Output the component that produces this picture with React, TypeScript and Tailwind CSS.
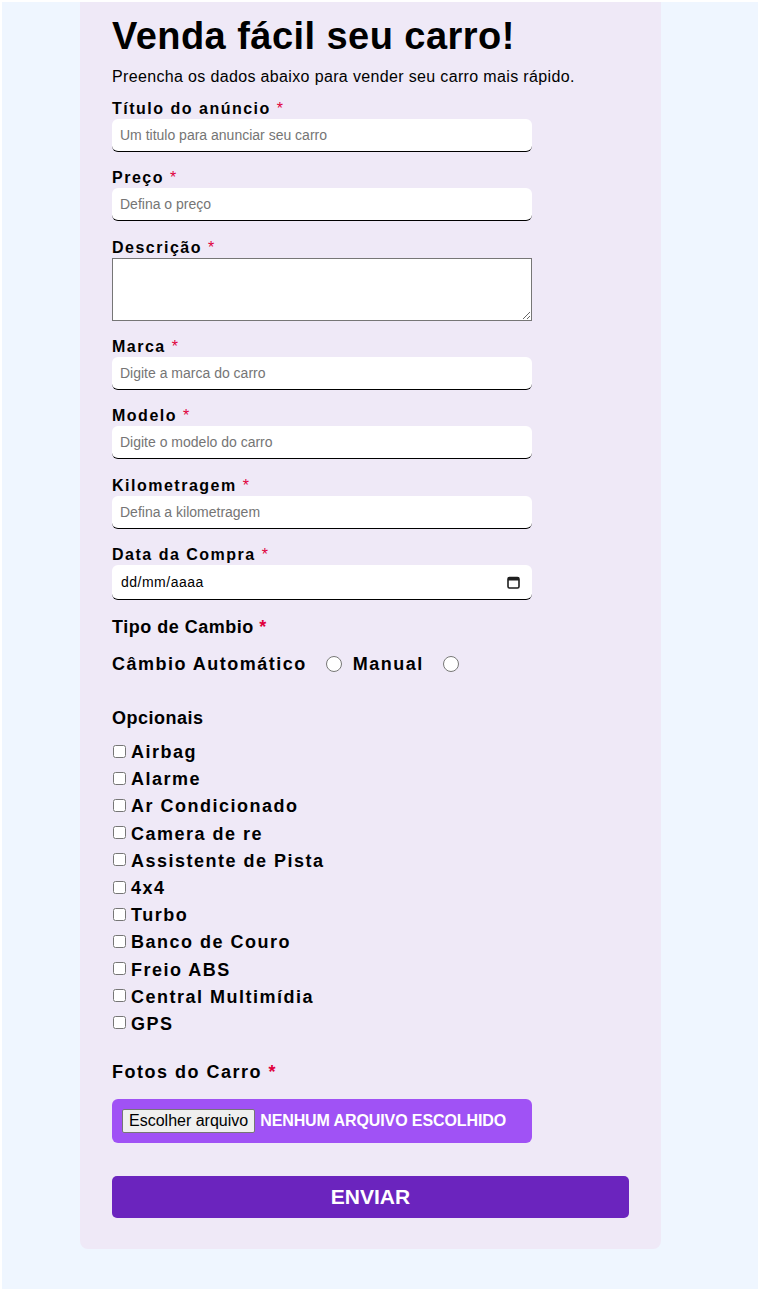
import React from "react";

const font = { fontFamily: '"Liberation Sans", Arial, sans-serif' };

function Req({ bold = false }: { bold?: boolean }) {
  return <span className={`text-[#e0003c] ${bold ? "font-bold" : "font-normal"}`}>*</span>;
}

function Label({ children }: { children: React.ReactNode }) {
  return (
    <label className="block text-[16px] leading-[19px] font-bold tracking-[1.5px] text-black mb-[1px]">
      {children} <Req />
    </label>
  );
}

function Field({ label, placeholder }: { label: string; placeholder: string }) {
  return (
    <div className="mb-[16.5px]">
      <Label>{label}</Label>
      <input
        placeholder={placeholder}
        className="block w-[420px] h-[33px] bg-white rounded-[6px] border-b border-black px-[8px] text-[14px] placeholder:text-[#757575] outline-none"
      />
    </div>
  );
}

const opcionais = [
  "Airbag",
  "Alarme",
  "Ar Condicionado",
  "Camera de re",
  "Assistente de Pista",
  "4x4",
  "Turbo",
  "Banco de Couro",
  "Freio ABS",
  "Central Multimídia",
  "GPS",
];

export default function App() {
  return (
    <div style={font} className="min-h-[1289px] bg-[#eff6ff] border-t-2 border-l-2 border-white">
      <div className="ml-[78px] w-[581px] bg-[#efe9f7] rounded-b-lg pl-[32px] pr-[32px] pt-[11px] pb-[31px]">
        <h1 className="text-[38px] leading-[46px] font-bold tracking-[0.45px] text-black">Venda fácil seu carro!</h1>
        <p className="text-[16px] leading-[20px] tracking-[0.35px] text-black mt-[8px] mb-[11.5px]">
          Preencha os dados abaixo para vender seu carro mais rápido.
        </p>

        <Field label="Título do anúncio" placeholder="Um titulo para anunciar seu carro" />
        <Field label="Preço" placeholder="Defina o preço" />

        <div className="mb-[16px]">
          <Label>Descrição</Label>
          <textarea className="block w-[420px] h-[63px] bg-white border border-[#767676] outline-none" />
        </div>

        <Field label="Marca" placeholder="Digite a marca do carro" />
        <Field label="Modelo" placeholder="Digite o modelo do carro" />
        <Field label="Kilometragem" placeholder="Defina a kilometragem" />

        <div className="mb-[15px]">
          <Label>Data da Compra</Label>
          <div className="flex items-center justify-between w-[420px] h-[35px] bg-white rounded-[6px] border-b border-black pl-[9px] pr-[12px] text-[14px] tracking-[0.5px] text-black">
            <span>dd/mm/aaaa</span>
            <svg width="13" height="13" viewBox="0 0 13 13" fill="none">
              <rect x="1" y="1.5" width="11" height="10.5" rx="1.5" stroke="#1f1f1f" strokeWidth="1.6" />
              <rect x="1" y="1.5" width="11" height="3" fill="#1f1f1f" />
            </svg>
          </div>
        </div>

        <div className="text-[18px] leading-[24px] font-bold tracking-[0.5px] text-black">
          Tipo de Cambio <Req bold />
        </div>
        <div className="flex items-center mt-[13px] h-[24px] text-[18px] font-bold tracking-[1.5px] text-black">
          <span>Câmbio Automático</span>
          <input type="radio" name="cambio" className="ml-[19px] mr-[11px] w-[16px] h-[16px] m-0" />
          <span>Manual</span>
          <input type="radio" name="cambio" className="ml-[19px] w-[16px] h-[16px] m-0" />
        </div>

        <div className="text-[18px] leading-[24px] font-bold tracking-[0.5px] text-black mt-[30px]">Opcionais</div>
        <div className="mt-[9px] flex flex-col">
          {opcionais.map((o) => (
            <label key={o} className="flex items-center h-[27.2px] text-[18px] font-bold tracking-[1.5px] text-black">
              <input type="checkbox" className="w-[13px] h-[13px] ml-[1px] mr-[5px] -mt-[3px]" />
              <span>{o}</span>
            </label>
          ))}
        </div>

        <div className="text-[18px] leading-[24px] font-bold tracking-[1.5px] text-black mt-[22px]">
          Fotos do Carro <Req bold />
        </div>

        <div className="mt-[15px] w-[420px] h-[44px] bg-[#a052f5] rounded-[6px] flex items-center pl-[10px]">
          <button
            type="button"
            className="h-[24px] px-[6px] bg-[#efefef] border border-[#767676] rounded-[2px] text-[16px] text-black leading-none"
          >
            Escolher arquivo
          </button>
          <span className="ml-[5px] text-white font-bold text-[16px] uppercase tracking-[-0.1px]">Nenhum arquivo escolhido</span>
        </div>

        <button
          type="button"
          className="mt-[33px] w-[517px] h-[42px] bg-[#6b24be] rounded-[5px] text-white font-bold text-[21px]"
        >
          ENVIAR
        </button>
      </div>
    </div>
  );
}
